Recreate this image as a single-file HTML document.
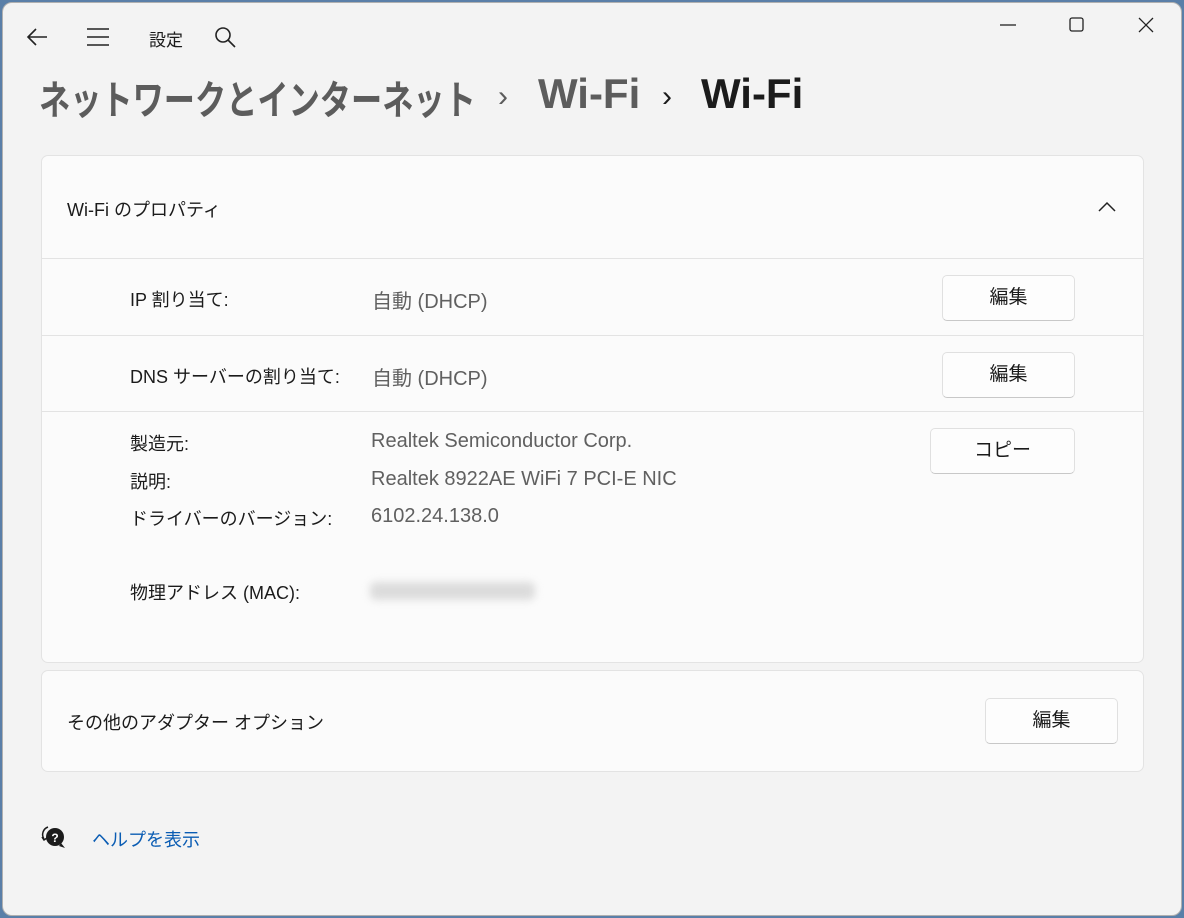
<!DOCTYPE html>
<html><head><meta charset="utf-8"><style>
body{margin:0;width:1184px;height:918px;background:#5a7fa8;font-family:"Liberation Sans","Noto Sans CJK JP",sans-serif;overflow:hidden;position:relative}
.win{position:absolute;left:2px;top:2px;width:1180px;height:914px;background:#f3f3f3;border-radius:10px;border:1px solid #b0b0b0;box-sizing:border-box}
.a{position:absolute;white-space:nowrap}
.card{position:absolute;left:41px;width:1103px;background:#fbfbfb;border:1px solid #e3e3e3;border-radius:7px;box-sizing:border-box}
.hr{position:absolute;left:41px;width:1103px;height:1px;background:#e3e3e3}
.btn{position:absolute;background:#fdfdfd;border:1px solid #e0e0e0;border-bottom-color:#c8c8c8;border-radius:5px;box-sizing:border-box;font-size:19px;color:#1a1a1a;text-align:center}
.lbl{font-size:18px;color:#1b1b1b}
.val{font-size:20px;color:#606060}
</style></head><body>
<div class="win">
</div>
<svg class="a" style="left:26px;top:26px" width="24" height="22" viewBox="0 0 24 22"><path d="M21 11H3M10 3L2 11l8 8" fill="none" stroke="#222" stroke-width="1.6"/></svg>
<svg class="a" style="left:86px;top:27px" width="24" height="20"><path d="M1 2h22M1 10h22M1 18h22" stroke="#222" stroke-width="1.6"/></svg>
<div class="a" style="left:149px;top:26px;font-size:17px;color:#1b1b1b">設定</div>
<svg class="a" style="left:214px;top:26px" width="22" height="22"><circle cx="9" cy="9" r="7" fill="none" stroke="#222" stroke-width="1.6"/><path d="M14 14l7 7" stroke="#222" stroke-width="1.6"/></svg>
<svg class="a" style="left:1000px;top:16px" width="160" height="20"><path d="M0 9h16" stroke="#222" stroke-width="1.3"/><rect x="70" y="2" width="13" height="13" rx="2" fill="none" stroke="#222" stroke-width="1.3"/><path d="M139 2l14 14M153 2l-14 14" stroke="#222" stroke-width="1.3"/></svg>
<div class="a" style="left:39px;top:68px;font-size:40px;color:#5c5c5c;font-weight:bold;transform:scaleX(0.78);transform-origin:0 0">ネットワークとインターネット</div>
<div class="a" style="left:498px;top:80px;font-size:30px;color:#5c5c5c">›</div>
<div class="a" style="left:538px;top:70px;font-size:42px;color:#5c5c5c;font-weight:bold">Wi-Fi</div>
<div class="a" style="left:662px;top:80px;font-size:30px;color:#1b1b1b">›</div>
<div class="a" style="left:701px;top:70px;font-size:42px;color:#1b1b1b;font-weight:bold">Wi-Fi</div>

<div class="card" style="top:155px;height:508px"></div>
<div class="a lbl" style="left:67px;top:196px">Wi-Fi のプロパティ</div>
<svg class="a" style="left:1098px;top:201px" width="18" height="12"><path d="M1 10l8-8 8 8" fill="none" stroke="#222" stroke-width="1.5"/></svg>
<div class="hr" style="top:258px"></div>
<div class="a lbl" style="left:130px;top:286px">IP 割り当て:</div>
<div class="a val" style="left:372px;top:285px">自動 (DHCP)</div>
<div class="btn" style="left:942px;top:275px;width:133px;height:46px;line-height:44px">編集</div>
<div class="hr" style="top:335px"></div>
<div class="a lbl" style="left:130px;top:363px">DNS サーバーの割り当て:</div>
<div class="a val" style="left:372px;top:362px">自動 (DHCP)</div>
<div class="btn" style="left:942px;top:352px;width:133px;height:46px;line-height:44px">編集</div>
<div class="hr" style="top:411px"></div>
<div class="a lbl" style="left:130px;top:430px">製造元:</div>
<div class="a lbl" style="left:130px;top:468px">説明:</div>
<div class="a lbl" style="left:130px;top:505px">ドライバーのバージョン:</div>
<div class="a lbl" style="left:130px;top:579px">物理アドレス (MAC):</div>
<div class="a val" style="left:371px;top:430px">Realtek Semiconductor Corp.</div>
<div class="a val" style="left:371px;top:468px">Realtek 8922AE WiFi 7 PCI-E NIC</div>
<div class="a val" style="left:371px;top:505px">6102.24.138.0</div>
<div class="a" style="left:370px;top:582px;width:165px;height:18px;background:#dcdcdc;filter:blur(4px);border-radius:6px"></div>
<div class="btn" style="left:930px;top:428px;width:145px;height:46px;line-height:44px">コピー</div>

<div class="card" style="top:670px;height:102px"></div>
<div class="a lbl" style="left:67px;top:709px">その他のアダプター オプション</div>
<div class="btn" style="left:985px;top:698px;width:133px;height:46px;line-height:44px">編集</div>

<svg class="a" style="left:40px;top:823px" width="26" height="26"><path d="M8 4a8 8 0 0 0-4 12" fill="none" stroke="#1b1b1b" stroke-width="1.5"/><path d="M2 14l2 3 3-2" fill="none" stroke="#1b1b1b" stroke-width="1.5"/><circle cx="15" cy="14" r="9" fill="#1b1b1b"/><path d="M21 20l4 5-6-2z" fill="#1b1b1b"/><text x="15" y="19" font-size="12" font-weight="bold" fill="#fff" text-anchor="middle" font-family="Liberation Sans">?</text></svg>
<div class="a" style="left:92px;top:826px;font-size:18px;color:#0a5cb3">ヘルプを表示</div>
</body></html>
